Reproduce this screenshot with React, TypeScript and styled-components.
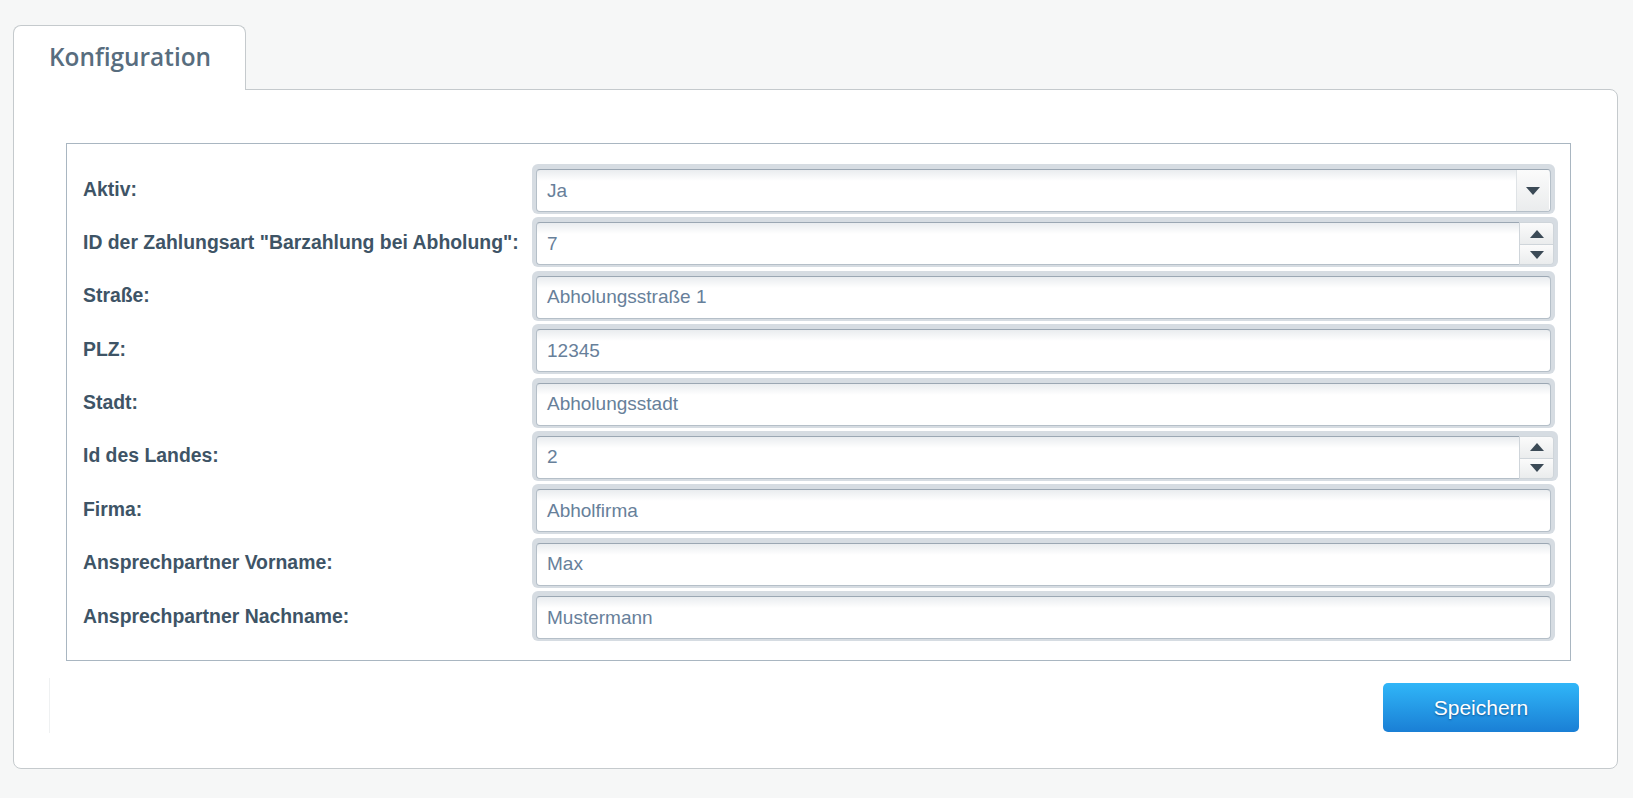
import React from "react";
import styled, { createGlobalStyle } from "styled-components";

const Global = createGlobalStyle`
  html, body { margin: 0; padding: 0; background: #f6f7f7; }
  body { font-family: "Liberation Sans", Arial, sans-serif; }
  * { box-sizing: border-box; }
`;

const Page = styled.div`
  padding: 25px 15px 0 13px;
`;

const TabStrip = styled.div`
  display: flex;
`;

const Tab = styled.div`
  position: relative;
  z-index: 1;
  width: 233px;
  height: 65px;
  margin-bottom: -1px;
  padding: 14px 0 0 35px;
  background: #fff;
  border: 1px solid #c5cacd;
  border-bottom: none;
  border-radius: 8px 8px 0 0;
  font-family: "Open Sans", sans-serif;
  font-weight: 600;
  font-size: 24.4px;
  color: #586d7e;
`;

const PanelBody = styled.div`
  background: #fff;
  border: 1px solid #c5cacd;
  border-radius: 0 8px 8px 8px;
  padding: 53px 0 35px 0;
`;

const Fieldset = styled.div`
  margin: 0 46px 0 52px;
  border: 1px solid #a9b6c1;
  padding: 20px 15px 19px 16px;
  display: grid;
  grid-template-columns: 449px 1fr;
  row-gap: 3.4px;
  align-items: center;
`;

const Label = styled.div`
  font-weight: bold;
  font-size: 19.4px;
  color: #3e5466;
`;

const Halo = styled.div<{ $extra?: number }>`
  height: 50px;
  padding: 5px 4px 2px 4px;
  background: #d6dce2;
  border-radius: 6px;
  display: flex;
  margin-right: ${(p) => (p.$extra ? -p.$extra : 0)}px;
`;

const Field = styled.div<{ $openRight?: boolean }>`
  flex: 1;
  display: flex;
  align-items: center;
  padding-left: 10px;
  border: 1px solid #b5bfc8;
  border-top-color: #9ba7b3;
  ${(p) => (p.$openRight ? "border-right: none;" : "")}
  border-radius: ${(p) => (p.$openRight ? "4px 0 0 4px" : "4px")};
  background: linear-gradient(#e9ecef 0px, #fff 11px);
  font-size: 19px;
  color: #67809a;
  overflow: hidden;
`;

const FieldText = styled.span`
  flex: 1;
`;

const DropButton = styled.div`
  width: 33px;
  align-self: stretch;
  margin-right: 1px;
  border-left: 1px solid #dfe3e6;
  background: linear-gradient(#fbfbfb, #eaeced);
  display: flex;
  align-items: center;
  justify-content: center;
`;

const Spinner = styled.div`
  width: 35px;
  display: flex;
  flex-direction: column;
  border: 1px solid #cfd5da;
  border-radius: 0 4px 4px 0;
  overflow: hidden;
`;

const SpinButton = styled.div<{ $h: number }>`
  height: ${(p) => p.$h}px;
  display: flex;
  align-items: center;
  justify-content: center;
  background: linear-gradient(#fbfbfb, #eaeced);
  & + & { border-top: 1px solid #cfd5da; }
`;

const Tri = ({ up }: { up?: boolean }) => (
  <svg width="14" height="8" viewBox="0 0 14 8">
    <path d={up ? "M0 8 L7 0 L14 8 Z" : "M0 0 L14 0 L7 8 Z"} fill="#3b4a56" />
  </svg>
);

const ButtonBar = styled.div`
  margin: 17px 38px 0 35px;
  height: 55px;
  padding-top: 5px;
  border-left: 1px solid #eff1f2;
  display: flex;
  justify-content: flex-end;
  align-items: flex-start;
`;

const SaveButton = styled.button`
  width: 196px;
  height: 49px;
  border: none;
  border-radius: 5px;
  background: linear-gradient(#30b6f8, #1a7fd5);
  color: #fff;
  font-family: "Liberation Sans", Arial, sans-serif;
  font-size: 21px;
  text-shadow: 0 1px 2px rgba(0, 40, 90, 0.55);
  cursor: pointer;
`;

type Row = { label: string; kind: "select" | "number" | "text"; value: string };

const rows: Row[] = [
  { label: "Aktiv:", kind: "select", value: "Ja" },
  { label: 'ID der Zahlungsart "Barzahlung bei Abholung":', kind: "number", value: "7" },
  { label: "Straße:", kind: "text", value: "Abholungsstraße 1" },
  { label: "PLZ:", kind: "text", value: "12345" },
  { label: "Stadt:", kind: "text", value: "Abholungsstadt" },
  { label: "Id des Landes:", kind: "number", value: "2" },
  { label: "Firma:", kind: "text", value: "Abholfirma" },
  { label: "Ansprechpartner Vorname:", kind: "text", value: "Max" },
  { label: "Ansprechpartner Nachname:", kind: "text", value: "Mustermann" },
];

export default function App() {
  return (
    <>
      <Global />
      <Page>
        <TabStrip>
          <Tab>Konfiguration</Tab>
        </TabStrip>
        <PanelBody>
          <Fieldset>
            {rows.map((r) => (
              <React.Fragment key={r.label}>
                <Label>{r.label}</Label>
                {r.kind === "select" && (
                  <Halo>
                    <Field>
                      <FieldText>{r.value}</FieldText>
                      <DropButton>
                        <Tri />
                      </DropButton>
                    </Field>
                  </Halo>
                )}
                {r.kind === "number" && (
                  <Halo $extra={3}>
                    <Field $openRight>
                      <FieldText>{r.value}</FieldText>
                    </Field>
                    <Spinner>
                      <SpinButton $h={21}>
                        <Tri up />
                      </SpinButton>
                      <SpinButton $h={20}>
                        <Tri />
                      </SpinButton>
                    </Spinner>
                  </Halo>
                )}
                {r.kind === "text" && (
                  <Halo>
                    <Field>
                      <FieldText>{r.value}</FieldText>
                    </Field>
                  </Halo>
                )}
              </React.Fragment>
            ))}
          </Fieldset>
          <ButtonBar>
            <SaveButton>Speichern</SaveButton>
          </ButtonBar>
        </PanelBody>
      </Page>
    </>
  );
}
